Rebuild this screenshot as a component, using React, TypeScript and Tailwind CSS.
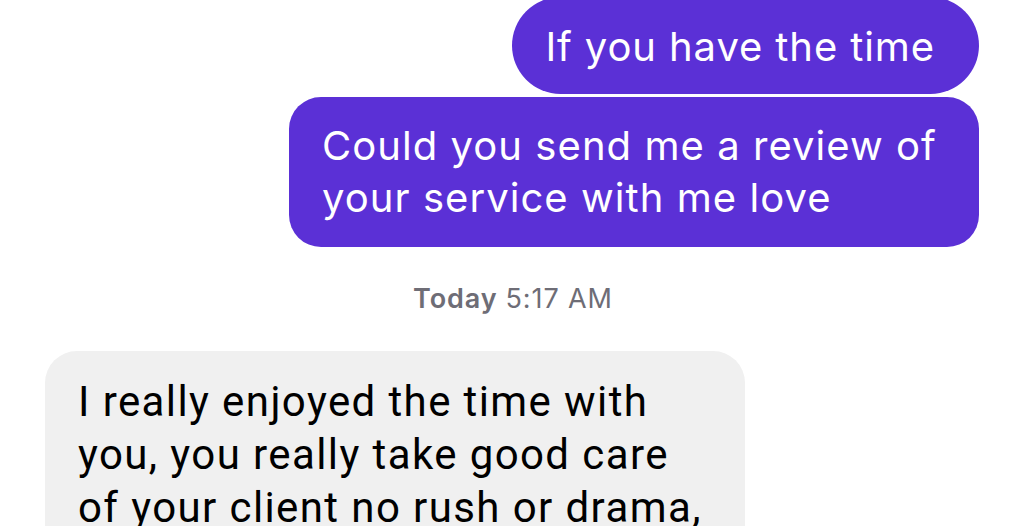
export default function App() {
  return (
    <div className="w-[1024px] h-[526px] overflow-hidden bg-white flex flex-col">
      <div className="flex flex-col items-end pr-[45px] -mt-[3px] gap-[3px] shrink-0">
        <div className="h-[97px] rounded-full bg-[#5b30d6] text-white flex items-center pl-[33px] pr-[44px] pt-[2px] font-['Inter','Liberation_Sans',sans-serif] text-[40px] leading-[52px] tracking-[0.9px]">
          If you have the time
        </div>
        <div className="w-[690px] h-[150px] rounded-[32px] bg-[#5b30d6] text-white pl-[33px] pr-[20px] pt-[23px] font-['Inter','Liberation_Sans',sans-serif] text-[40px] leading-[52px] tracking-[1.05px]">
          Could you send me a review of your service with me love
        </div>
      </div>
      <div className="mt-[36px] shrink-0 flex justify-center pl-[2px] font-['Inter','Liberation_Sans',sans-serif] text-[27px] leading-[32px] tracking-[0.9px] text-[#6e6d76]">
        <span className="font-semibold">Today</span>
        <span className="ml-[8px]">5:17 AM</span>
      </div>
      <div className="mt-[36px] ml-[45px] shrink-0 w-[700px] h-[260px] rounded-[32px] bg-[#f0f0f0] pl-[33px] pr-[36px] pt-[24px] font-['Roboto','Liberation_Sans',sans-serif] text-[42px] leading-[53px] tracking-[1.4px] text-black">
        I really enjoyed the time with you, you really take good care of your client no rush or drama,
      </div>
    </div>
  );
}
